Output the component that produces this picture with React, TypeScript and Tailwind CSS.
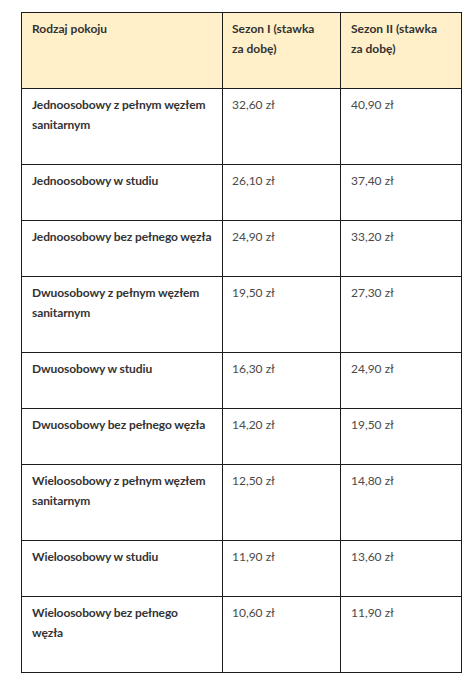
import React from "react";

const rows: [string[], string, string][] = [
  [["Jednoosobowy z pełnym węzłem", "sanitarnym"], "32,60 zł", "40,90 zł"],
  [["Jednoosobowy w studiu"], "26,10 zł", "37,40 zł"],
  [["Jednoosobowy bez pełnego węzła"], "24,90 zł", "33,20 zł"],
  [["Dwuosobowy z pełnym węzłem", "sanitarnym"], "19,50 zł", "27,30 zł"],
  [["Dwuosobowy w studiu"], "16,30 zł", "24,90 zł"],
  [["Dwuosobowy bez pełnego węzła"], "14,20 zł", "19,50 zł"],
  [["Wieloosobowy z pełnym węzłem", "sanitarnym"], "12,50 zł", "14,80 zł"],
  [["Wieloosobowy w studiu"], "11,90 zł", "13,60 zł"],
  [["Wieloosobowy bez pełnego", "węzła"], "10,60 zł", "11,90 zł"],
];

function Lines({ lines }: { lines: string[] }) {
  return (
    <>
      {lines.map((l, i) => (
        <React.Fragment key={i}>
          {i > 0 && <br />}
          {l}
        </React.Fragment>
      ))}
    </>
  );
}

export default function App() {
  return (
    <div className="min-h-[682px] w-[471px] bg-white pt-[12px] pl-[21px] font-['Lato',sans-serif] text-[12px] leading-[20px] text-[#333]">
      <table className="w-[440px] table-fixed border-collapse">
        <colgroup>
          <col className="w-[201px]" />
          <col className="w-[118px]" />
          <col className="w-[121px]" />
        </colgroup>
        <thead>
          <tr className="bg-[#fff0ca]">
            <th className="border border-[#1c1c1c] pl-[10px] pr-[4px] pt-[6px] pb-[29px] text-left align-top font-bold whitespace-nowrap">
              Rodzaj pokoju
            </th>
            <th className="border border-[#1c1c1c] pl-[9px] pr-[4px] pt-[6px] pb-[29px] text-left align-top font-bold whitespace-nowrap">
              <Lines lines={["Sezon I (stawka", "za dobę)"]} />
            </th>
            <th className="border border-[#1c1c1c] pl-[10px] pr-[4px] pt-[6px] pb-[29px] text-left align-top font-bold whitespace-nowrap">
              <Lines lines={["Sezon II (stawka", "za dobę)"]} />
            </th>
          </tr>
        </thead>
        <tbody>
          {rows.map(([name, a, b]) => (
            <tr key={name.join(" ")}>
              <td className="border border-[#1c1c1c] pl-[10px] pr-[4px] pt-[6px] pb-[29px] align-top font-bold whitespace-nowrap tracking-[-0.1px]">
                <Lines lines={name} />
              </td>
              <td className="border border-[#1c1c1c] pl-[9px] pr-[4px] pt-[6px] pb-[29px] align-top text-[#4a4a4a]">
                {a}
              </td>
              <td className="border border-[#1c1c1c] pl-[10px] pr-[4px] pt-[6px] pb-[29px] align-top text-[#4a4a4a]">
                {b}
              </td>
            </tr>
          ))}
        </tbody>
      </table>
    </div>
  );
}
